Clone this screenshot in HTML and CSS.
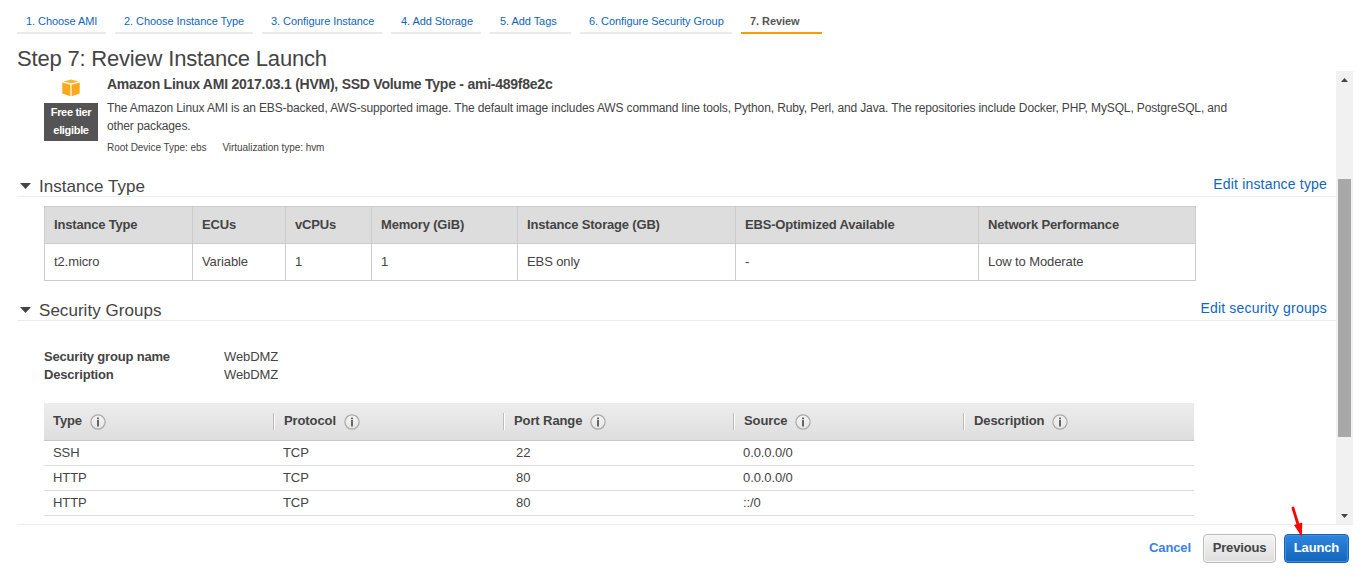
FILE: index.html
```
<!DOCTYPE html>
<html lang="en">
<head>
<meta charset="utf-8">
<title>Review Instance Launch</title>
<link rel="stylesheet" href="styles.css">
</head>
<body>
<svg class="defs" width="0" height="0">
  <defs>
    <linearGradient id="ring" x1="0" y1="0" x2="0" y2="1"><stop offset="0" stop-color="#f4f4f4"/><stop offset="1" stop-color="#e6e6e6"/></linearGradient>
    <symbol id="info" viewBox="0 0 16 16">
      <circle cx="8" cy="8" r="7.1" fill="url(#ring)" stroke="#aaa" stroke-width="1.2"/>
      <path d="M7 3.4h2v1.8H7zM7 6h2v6.4H7z" fill="#666"/>
    </symbol>
  </defs>
</svg>
<div class="page">
  <nav class="tabs">
    <a class="tab t1">1. Choose AMI</a>
    <a class="tab t2">2. Choose Instance Type</a>
    <a class="tab t3">3. Configure Instance</a>
    <a class="tab t4">4. Add Storage</a>
    <a class="tab t5">5. Add Tags</a>
    <a class="tab t6">6. Configure Security Group</a>
    <a class="tab t7 active">7. Review</a>
  </nav>
  <h1 class="title">Step 7: Review Instance Launch</h1>
  <div class="main">
    <div class="content">
      <section class="ami">
        <div class="ami-side">
          <svg class="cube" width="18" height="18" viewBox="0 0 18 18">
            <path d="M9 .6 16.6 2.5 9 4.6 1.4 2.5z" fill="#fcb42c"/>
            <path d="M.3 3.5 8.4 5.7v11.6L.3 14.6z" fill="#fba81a"/>
            <path d="M17.7 3.5 9.6 5.7v11.6l8.1-2.7z" fill="#fba81a"/>
          </svg>
          <div class="free">Free tier<br>eligible</div>
        </div>
        <div class="ami-text">
          <h2 class="ami-name">Amazon Linux AMI 2017.03.1 (HVM), SSD Volume Type - ami-489f8e2c</h2>
          <p class="ami-desc">The Amazon Linux AMI is an EBS-backed, AWS-supported image. The default image includes AWS command line tools, Python, Ruby, Perl, and Java. The repositories include Docker, PHP, MySQL, PostgreSQL, and<br>other packages.</p>
          <p class="ami-meta"><span>Root Device Type: ebs</span><span>Virtualization type: hvm</span></p>
        </div>
      </section>

      <div class="section-head">
        <svg class="caret" width="11" height="6" viewBox="0 0 11 6"><path d="M0 0h11L5.5 6z" fill="#444"/></svg>
        <h3>Instance Type</h3>
        <a class="edit">Edit instance type</a>
      </div>
      <div class="specs">
        <div class="th">Instance Type</div><div class="th">ECUs</div><div class="th">vCPUs</div><div class="th">Memory (GiB)</div><div class="th">Instance Storage (GB)</div><div class="th">EBS-Optimized Available</div><div class="th">Network Performance</div>
        <div>t2.micro</div><div>Variable</div><div>1</div><div>1</div><div>EBS only</div><div>-</div><div>Low to Moderate</div>
      </div>

      <div class="section-head second">
        <svg class="caret" width="11" height="6" viewBox="0 0 11 6"><path d="M0 0h11L5.5 6z" fill="#444"/></svg>
        <h3>Security Groups</h3>
        <a class="edit">Edit security groups</a>
      </div>
      <dl class="group">
        <dt>Security group name</dt><dd>WebDMZ</dd>
        <dt>Description</dt><dd>WebDMZ</dd>
      </dl>
      <div class="rules">
        <div class="row head">
          <div>Type<svg class="i"><use href="#info"/></svg></div>
          <div>Protocol<svg class="i"><use href="#info"/></svg></div>
          <div>Port Range<svg class="i"><use href="#info"/></svg></div>
          <div>Source<svg class="i"><use href="#info"/></svg></div>
          <div>Description<svg class="i"><use href="#info"/></svg></div>
        </div>
        <div class="row"><div>SSH</div><div>TCP</div><div class="port">22</div><div>0.0.0.0/0</div><div></div></div>
        <div class="row"><div>HTTP</div><div>TCP</div><div class="port">80</div><div>0.0.0.0/0</div><div></div></div>
        <div class="row"><div>HTTP</div><div>TCP</div><div class="port">80</div><div>::/0</div><div></div></div>
      </div>
    </div>
    <div class="scrollbar">
      <svg width="7" height="4" viewBox="0 0 7 4"><path d="M0 4 3.5 0 7 4z" fill="#444"/></svg>
      <div class="thumb"></div>
      <svg width="7" height="4" viewBox="0 0 7 4"><path d="M0 0h7L3.5 4z" fill="#444"/></svg>
    </div>
  </div>
  <footer class="footer">
    <a class="cancel">Cancel</a>
    <button class="btn previous">Previous</button>
    <button class="btn launch">Launch
      <svg class="arrow" width="16" height="34" viewBox="0 0 16 34"><path d="M4 3 9.5 21" stroke="#fe0000" stroke-width="2.8" stroke-linecap="round"/><path d="M5 20 13.3 17.6 12.8 32z" fill="#fe0000"/></svg>
    </button>
  </footer>
</div>
</body>
</html>
```
FILE: styles.css
```
* { box-sizing: border-box; }
body { margin: 0; background: #fff; color: #444; font: 13px/18px "Liberation Sans", Arial, sans-serif; letter-spacing: -0.1px; }
h1, h2, h3, p, dl, dd { margin: 0; font-weight: normal; }
.defs { position: absolute; }
.page { width: 1357px; height: 582px; padding: 0 4px 0 17px; display: flex; flex-direction: column; overflow: hidden; }

.tabs { display: flex; gap: 9px; height: 34px; padding-top: 10px; font-size: 11px; letter-spacing: -0.06px; }
.tab { height: 24px; padding: 2px 0 0 9px; border-bottom: 2px solid #eaeaea; color: #1166bb; white-space: nowrap; }
.t1 { width: 89px; }
.t2 { width: 138px; }
.t3 { width: 120px; }
.t4 { width: 90px; padding-left: 10px; }
.t5 { width: 81px; padding-left: 10px; }
.t6 { width: 152px; }
.t7 { width: 81px; }
.tab.active { border-color: #ff9900; color: #555; font-weight: bold; }

.title { height: 37px; padding-top: 10px; font-size: 22px; line-height: 29px; letter-spacing: -0.19px; white-space: nowrap; }

.main { display: flex; height: 453px; }
.content { width: 1319px; }
.ami { display: flex; height: 105px; padding-left: 27px; }
.ami-side { width: 54px; padding-top: 8px; }
.cube { display: block; margin: 0 auto 6px; }
.free { height: 38px; background: #545454; color: #fff; font-size: 11px; font-weight: bold; letter-spacing: -0.32px; text-align: center; }
.ami-text { margin-left: 9px; padding-top: 4px; white-space: nowrap; }
.ami-name { font-size: 14px; font-weight: bold; letter-spacing: -0.245px; }
.ami-desc { margin-top: 6px; font-size: 12px; letter-spacing: -0.127px; }
.ami-meta { display: flex; gap: 16px; margin-top: 4px; font-size: 10px; letter-spacing: -0.05px; }

.section-head { display: flex; height: 21px; border-bottom: 1px solid #eaeaea; line-height: 22px; }
.section-head h3 { font-size: 17px; letter-spacing: 0.04px; }
.caret { margin: 7px 8px 0 3px; }
.edit { margin: -3px 9px 0 auto; color: #1166bb; font-size: 14px; letter-spacing: 0.18px; }

.specs { display: grid; grid-template-columns: 148px 93px 86px 146px 218px 243px 217px; grid-template-rows: 37px 37px; width: 1152px; margin: 9px 0 0 27px; border: solid #ccc; border-width: 1px 0 0 1px; }
.specs > div { padding: 9px 0 0 9px; border: solid #ccc; border-width: 0 1px 1px 0; }
.specs .th { background: #ddd; font-weight: bold; letter-spacing: -0.18px; }
.second { margin-top: 19px; }

.group { display: grid; grid-template-columns: 180px auto; margin: 27px 0 0 27px; }
.group dt { font-weight: bold; letter-spacing: -0.18px; }

.rules { width: 1150px; margin: 19px 0 0 27px; }
.row { display: grid; grid-template-columns: repeat(5, 230px); height: 25px; border-bottom: 1px solid #ddd; line-height: 24px; }
.row > div { padding-left: 9px; }
.row .port { padding-left: 12px; }
.head { height: 38px; padding-top: 10px; border-color: #c8c8c8; background: linear-gradient(#ededed, #dedede); font-weight: bold; line-height: 16px; }
.head > div { display: flex; height: 17px; }
.head > div + div { margin-left: -1px; border-left: 1px solid #bbb; box-shadow: inset 1px 0 #fff; padding-left: 10px; }
.i { width: 16px; height: 16px; margin: 1px 0 0 8px; }

.scrollbar { display: flex; flex-direction: column; align-items: center; width: 17px; height: 453px; padding: 7px 0 6px; background: #f1f1f1; }
.thumb { width: 13px; height: 258px; margin: 97px 0 auto; background: #a8a8a8; }

.footer { display: flex; height: 58px; padding: 9px 4px 0 0; border-top: 1px solid #eaeaea; justify-content: flex-end; }
.cancel { margin: 5px 12px 0 0; color: #3a84dc; font-weight: bold; }
.btn { position: relative; height: 29px; padding: 0 0 2px; border: 1px solid #bbb; border-radius: 4px; background: linear-gradient(#f4f4f4, #dedede); box-shadow: inset 0 0 0 1px #f5f5f5; color: #444; font: bold 13px "Liberation Sans", Arial, sans-serif; letter-spacing: -0.15px; }
.previous { width: 73px; margin-right: 8px; }
.launch { width: 65px; border-color: #1562b5; background: linear-gradient(#2f86dd, #1265bb); box-shadow: inset 0 0 0 1px #4090df; color: #fff; }
.arrow { position: absolute; left: 4px; top: -30px; }
```
